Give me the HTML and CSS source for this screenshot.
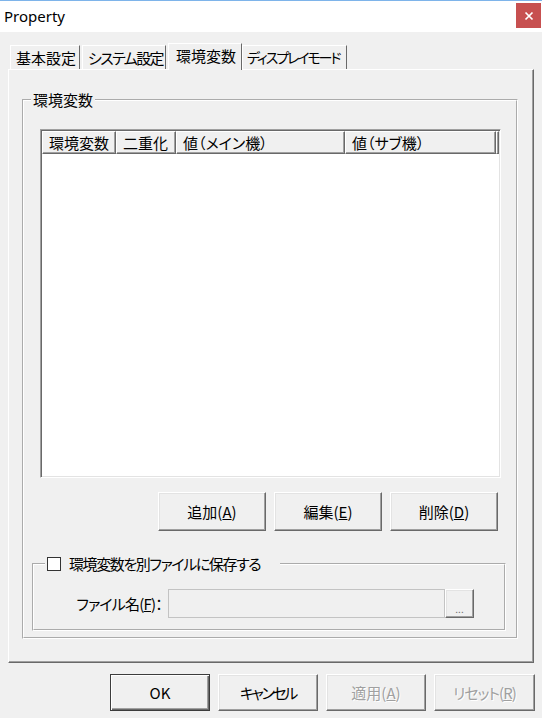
FILE: index.html
```html
<!DOCTYPE html>
<html lang="ja">
<head>
    <meta charset="UTF-8">
    <meta name="viewport" content="width=device-width, initial-scale=1.0">
    <title>Property</title>
    <link rel="stylesheet" href="styles.css">
</head>
<body>
    <div class="titlebar">
        <span class="title">Property</span>
        <button class="close" title="Close">
            <svg width="10" height="10" viewBox="0 0 10 10">
                <path d="M1.5 1.5 L8.5 8.5 M8.5 1.5 L1.5 8.5" stroke="#fff" stroke-width="1.7" fill="none"/>
            </svg>
        </button>
    </div>

    <div class="tabs">
        <div class="tab tab-basic">基本設定</div>
        <div class="tab tab-system">システム設定</div>
        <div class="tab tab-env active">環境変数</div>
        <div class="tab tab-display">ディスプレイモード</div>
    </div>

    <div class="page">
        <fieldset class="group">
            <legend>環境変数</legend>

            <div class="list">
                <div class="list-head">
                    <div class="col c-name">環境変数</div>
                    <div class="col c-dup">二重化</div>
                    <div class="col c-main">値（メイン機）</div>
                    <div class="col c-sub">値（サブ機）</div>
                    <div class="col c-fill"></div>
                </div>
            </div>

            <div class="actions">
                <button class="btn">追加(<u>A</u>)</button>
                <button class="btn">編集(<u>E</u>)</button>
                <button class="btn">削除(<u>D</u>)</button>
            </div>

            <fieldset class="group sub">
                <legend class="check-legend"><span class="check"></span>環境変数を別ファイルに保存する</legend>
                <div class="file-row">
                    <label class="file-label">ファイル名(<u>F</u>)：</label>
                    <div class="textbox"></div>
                    <button class="btn browse">...</button>
                </div>
            </fieldset>
        </fieldset>
    </div>

    <div class="footer">
        <button class="btn default">OK</button>
        <button class="btn cancel">キャンセル</button>
        <button class="btn disabled">適用(<u>A</u>)</button>
        <button class="btn disabled reset">リセット(<u>R</u>)</button>
    </div>
</body>
</html>
```

FILE: styles.css
```css
body {
    margin: 0;
    background: #f0f0f0;
    font-family: "Noto Sans CJK JP", sans-serif;
    font-size: 15px;
    font-feature-settings: "palt";
    color: #000;
}
.titlebar {
    display: flex;
    justify-content: space-between;
    align-items: flex-start;
    height: 31px;
    border-top: 1px solid #7eb4ea;
    background: #fff;
}
.title {
    font-family: "Noto Sans", sans-serif;
    font-size: 15px;
    line-height: 31px;
    padding-left: 4px;
}
.close {
    display: flex;
    align-items: center;
    justify-content: center;
    width: 25px;
    height: 25px;
    margin: 2px 1px 0 0;
    padding: 0;
    border: 0;
    background: #c75050;
}
.tabs {
    display: flex;
    align-items: flex-end;
    height: 37px;
    padding-left: 10px;
}
.tab {
    box-sizing: border-box;
    height: 24px;
    line-height: 23px;
    padding-left: 5px;
    margin-right: 2px;
    border-top: 1px solid #fff;
    border-left: 1px solid #fff;
    border-right: 1px solid #696969;
    white-space: nowrap;
    overflow: hidden;
}
.tab-basic { width: 70px; }
.tab-system { width: 84px; letter-spacing: -1.6px; }
.tab-env { width: 74px; }
.tab-display {
    width: 105px;
    padding-left: 4px;
    font-size: 14px;
    letter-spacing: -2.1px;
}
.tab.active {
    position: relative;
    z-index: 1;
    height: 27px;
    line-height: 24px;
    padding-left: 7px;
    margin-right: 0;
    margin-bottom: -1px;
    background: #f0f0f0;
}
.page {
    margin: 0 8px;
    padding: 20px 15px 23px 13px;
    border: 1px solid;
    border-color: #fff #696969 #696969 #fff;
    box-shadow: inset -1px -1px #a0a0a0;
}
.group {
    margin: 0;
    min-width: 0;
    padding: 19px 15px 6px 16px;
    border: 2px groove #fff;
}
.group legend {
    margin-left: -9px;
    padding: 0 2px;
    line-height: 20px;
}
.list {
    box-sizing: border-box;
    height: 349px;
    padding: 1px;
    background: #fff;
    border: 1px solid;
    border-color: #a0a0a0 #fff #fff #a0a0a0;
    box-shadow: inset 1px 1px #696969, inset -1px -1px #e3e3e3;
}
.list-head {
    display: flex;
    height: 23px;
}
.col {
    box-sizing: border-box;
    flex: none;
    padding-left: 6px;
    line-height: 21px;
    white-space: nowrap;
    background: #f0f0f0;
    border-top: 1px solid #fff;
    border-left: 1px solid #fff;
    border-right: 1px solid #696969;
    border-bottom: 1px solid #696969;
    box-shadow: inset -1px -1px #a0a0a0;
}
.c-name { width: 74px; }
.c-dup { width: 60px; }
.c-main { width: 169px; }
.c-sub { width: 151px; }
.c-fill { flex: 1; padding: 0; }
.actions {
    display: flex;
    justify-content: flex-end;
    gap: 8px;
    margin-top: 14px;
    padding-right: 3px;
}
.btn {
    box-sizing: border-box;
    width: 108px;
    height: 39px;
    padding: 0;
    font: inherit;
    color: #000;
    background: #f0f0f0;
    border: 1px solid;
    border-color: #fff #696969 #696969 #fff;
    box-shadow: inset -1px -1px #a0a0a0, inset 1px 1px #e3e3e3;
}
.group.sub {
    margin: 23px -5px 0 -8px;
    padding: 15px 10px 11px 11px;
}
.group .check-legend {
    display: flex;
    align-items: center;
    gap: 8px;
    margin-left: 0;
    padding: 0 20px 0 2px;
    letter-spacing: -1.4px;
}
.check {
    box-sizing: border-box;
    width: 14px;
    height: 14px;
    border: 1px solid #333;
    background: #fff;
}
.file-row {
    display: flex;
    align-items: center;
}
.file-label {
    width: 117px;
    margin-right: 6px;
    text-align: right;
    white-space: nowrap;
    letter-spacing: -0.8px;
}
.textbox {
    box-sizing: border-box;
    width: 277px;
    height: 29px;
    border: 1px solid #c3c3c3;
    background: #f0f0f0;
}
.btn.browse {
    width: 29px;
    height: 29px;
    font-size: 10px;
    line-height: 10px;
    padding-top: 10px;
    color: #6d6d6d;
}
.footer {
    display: flex;
    justify-content: flex-end;
    gap: 8px;
    margin-top: 11px;
    padding-right: 7px;
}
.footer .btn {
    width: 100px;
    height: 37px;
}
.footer .btn.cancel {
    letter-spacing: -2.4px;
}
.footer .btn.reset {
    width: 101px;
    letter-spacing: -1px;
}
.btn.default {
    border: 1px solid #3c3c3c;
    box-shadow: inset 1px 1px #fff, inset -1px -1px #696969, inset -2px -2px #a0a0a0;
}
.btn.disabled {
    color: #a0a0a0;
    text-shadow: 1px 1px 0 #fff;
}
```
